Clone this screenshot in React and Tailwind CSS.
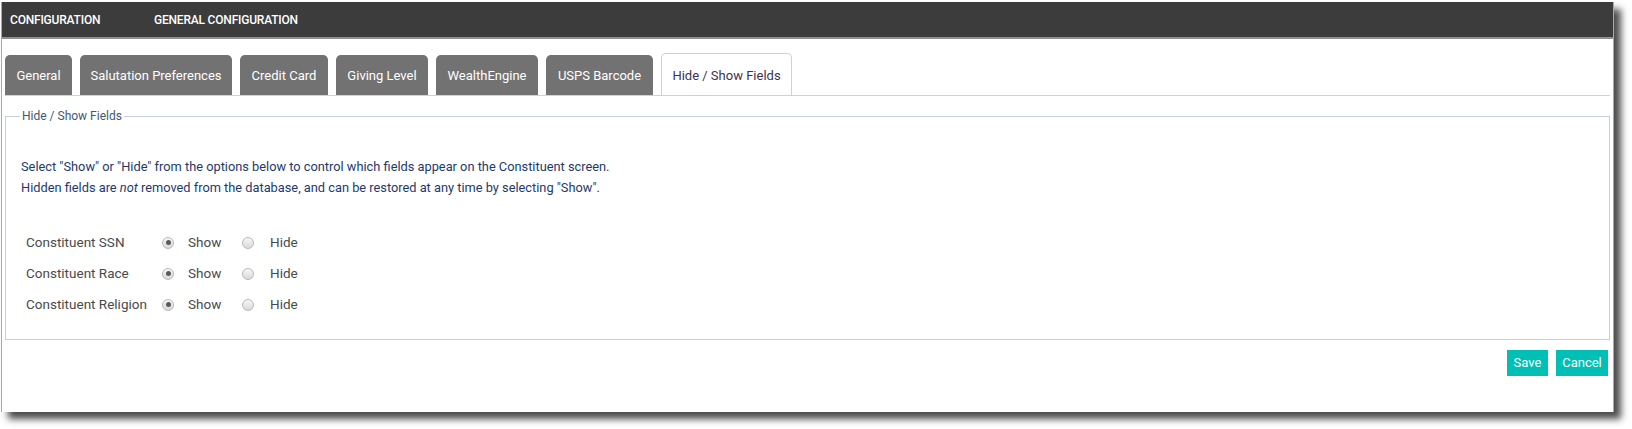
import React from 'react';

const tabs = [
  { label: 'General', w: 'w-[67px]' },
  { label: 'Salutation Preferences', w: 'w-[152px]' },
  { label: 'Credit Card', w: 'w-[88px]' },
  { label: 'Giving Level', w: 'w-[92px]' },
  { label: 'WealthEngine', w: 'w-[102px]' },
  { label: 'USPS Barcode', w: 'w-[107px]' },
];

const fields = ['Constituent SSN', 'Constituent Race', 'Constituent Religion'];

const Radio = ({ checked }) => (
  <span className="w-[12px] h-[12px] rounded-full border border-[#b9b9b9] bg-gradient-to-b from-[#f7f7f7] to-[#d9d9d9] flex items-center justify-center">
    {checked && <span className="w-[5px] h-[5px] rounded-full bg-[#5a5a5a]" />}
  </span>
);

const App = () => {
  return (
    <div className="w-[1632px] h-[429px] bg-white pt-[2px] pl-[1px] font-['Roboto',sans-serif]">
      <div className="w-[1613px] h-[410px] bg-white border-l border-r border-[#a9a9a9] shadow-[7px_7px_7px_rgba(0,0,0,0.7)] flex flex-col">
        {/* Header */}
        <div className="h-[37px] bg-[#3c3c3c] border-b-2 border-[#8f8f8f] flex items-center text-white text-[12px] font-medium tracking-[-0.2px]">
          <span className="pl-[8px] w-[152px]">CONFIGURATION</span>
          <span>GENERAL CONFIGURATION</span>
        </div>

        <div className="px-[3px] pt-[14px] flex flex-col">
          {/* Tabs */}
          <div className="flex items-end gap-[8px] border-b border-[#c6d3e2]">
            {tabs.map((t) => (
              <div
                key={t.label}
                className={`${t.w} h-[40px] rounded-t-[5px] bg-[#727272] text-white text-[13px] flex items-center justify-center pt-[2px]`}
              >
                {t.label}
              </div>
            ))}
            <div className="w-[131px] h-[42px] rounded-t-[5px] bg-white border border-b-0 border-[#c9d1da] text-[#3b3450] text-[13px] flex items-center justify-center pt-[2px]">
              Hide / Show Fields
            </div>
          </div>

          {/* Fieldset */}
          <fieldset className="mt-[13px] h-[231px] border border-[#c6d0dc] px-[14px]">
            <legend className="px-[2px] text-[12px] text-[#3e5878] leading-[14px]">Hide / Show Fields</legend>
            <div className="pl-px pt-[33px] text-[12.8px] text-[#1d3a6b] leading-[21px]">
              <p>Select "Show" or "Hide" from the options below to control which fields appear on the Constituent screen.</p>
              <p>
                Hidden fields are <em>not</em> removed from the database, and can be restored at any time by selecting "Show".
              </p>
            </div>
            <div className="pt-[34px] pl-[6px] flex flex-col gap-[10px] text-[13.5px] text-[#4a4a4a]">
              {fields.map((f) => (
                <div key={f} className="flex items-center h-[21px]">
                  <span className="w-[136px]">{f}</span>
                  <Radio checked />
                  <span className="ml-[14px] w-[54px]">Show</span>
                  <Radio />
                  <span className="ml-[16px]">Hide</span>
                </div>
              ))}
            </div>
          </fieldset>

          {/* Buttons */}
          <div className="flex justify-end gap-[8px] pr-[2px] mt-[10px]">
            <button className="w-[41px] h-[26px] bg-[#00bfb4] text-white text-[13px]">Save</button>
            <button className="w-[52px] h-[26px] bg-[#00bfb4] text-white text-[13px]">Cancel</button>
          </div>
        </div>
      </div>
    </div>
  );
};

export default App;
